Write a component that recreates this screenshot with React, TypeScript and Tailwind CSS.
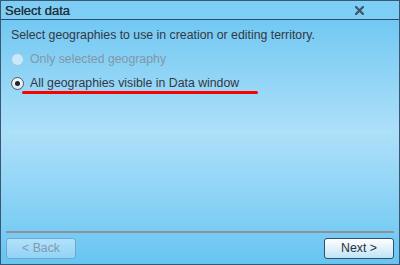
import React from "react";

// Select data dialog
export default function App() {
  return (
    <div className="flex h-[265px] w-[400px] flex-col overflow-hidden border border-[#3a5670] bg-gradient-to-b from-[#66c4f1] via-[#ade0f9] to-[#66c5f2] font-['Liberation_Sans',Arial,sans-serif] text-[12.3px] text-[#333844]">
      {/* title bar */}
      <div className="flex h-[19px] shrink-0 items-center justify-between border-b border-[#2f4c66] bg-[#7ccef5] pl-[4px] pr-[35px]">
        <span className="text-[13px] leading-none text-[#27313c] [text-shadow:0_0_0.4px_#27313c]">Select data</span>
        <svg width="9" height="9" viewBox="0 0 9 9" className="mt-[1px]">
          <path d="M1 1 L8 8 M8 1 L1 8" stroke="#3e5468" strokeWidth="2.2" strokeLinecap="square" />
        </svg>
      </div>

      <div className="flex flex-1 flex-col px-[10px] pt-[8px]">
        <p className="leading-[14px]">Select geographies to use in creation or editing territory.</p>

        <div className="mt-[10px] flex flex-col gap-[10px]">
          <label className="flex items-center gap-[6px] text-[#8396a8]">
            <span className="h-[13px] w-[13px] rounded-full border border-[#9fc6de] bg-[#c7e9fb]" />
            <span className="leading-[14px]">Only selected geography</span>
          </label>
          <div className="flex flex-col">
            <label className="flex items-center gap-[6px]">
              <span className="flex h-[13px] w-[13px] items-center justify-center rounded-full border border-[#4d5a66] bg-gradient-to-b from-[#f4f6f8] to-[#dfe6ec]">
                <span className="h-[5px] w-[5px] rounded-full bg-[#1e252c]" />
              </span>
              <span className="leading-[14px]">All geographies visible in Data window</span>
            </label>
            <div className="ml-[11px] mt-[1px] h-[3px] w-[236px] rounded-full bg-[#ff0000]" />
          </div>
        </div>

        <div className="flex-1" />
      </div>

      <div className="mx-[5px] h-[2px] bg-[#8e9296]" />
      <div className="flex justify-between px-[5px] pb-[5px] pt-[5px]">
        <button className="h-[21px] w-[70px] rounded-[3px] border border-[#6fa8cc] bg-gradient-to-b from-[#b2e2fb] to-[#92d3f6] text-[12.3px] text-[#7f9bb0]">
          &lt; Back
        </button>
        <button className="h-[21px] w-[70px] rounded-[3px] border border-[#33506a] bg-gradient-to-b from-[#ffffff] to-[#bfe3f6] text-[12.3px] text-[#2a313a]">
          Next &gt;
        </button>
      </div>
    </div>
  );
}
